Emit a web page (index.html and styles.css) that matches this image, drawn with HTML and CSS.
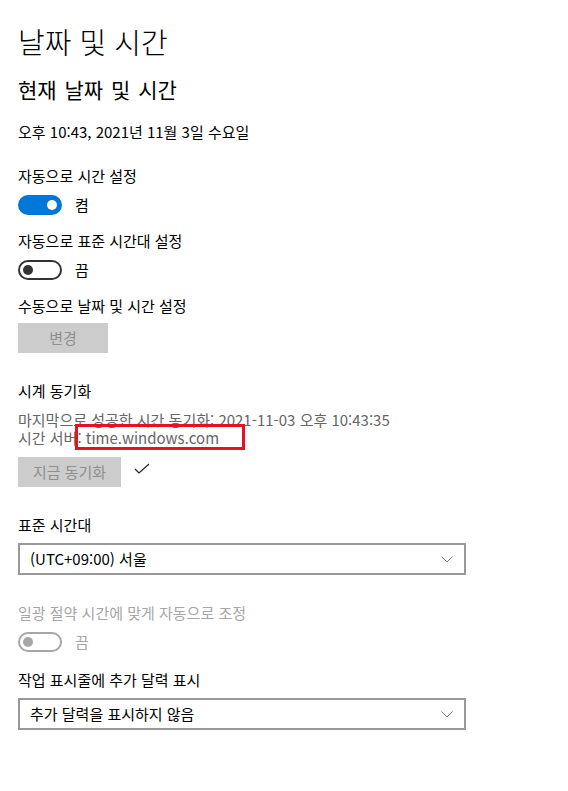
FILE: index.html
```html
<!DOCTYPE html>
<html lang="ko">
<head>
<meta charset="utf-8">
<title>날짜 및 시간</title>
<link rel="stylesheet" href="styles.css">
</head>
<body>
<main class="page">
  <h1 class="title">날짜 및 시간</h1>
  <h2 class="subtitle">현재 날짜 및 시간</h2>
  <p class="text date">오후 10:43, 2021년 11월 3일 수요일</p>

  <p class="text label l1">자동으로 시간 설정</p>
  <div class="toggle-row">
    <span class="toggle on"><span class="knob"></span></span>
    <span class="toggle-text">켬</span>
  </div>

  <p class="text label l2">자동으로 표준 시간대 설정</p>
  <div class="toggle-row">
    <span class="toggle off"><span class="knob"></span></span>
    <span class="toggle-text">끔</span>
  </div>

  <p class="text label l2">수동으로 날짜 및 시간 설정</p>
  <button class="btn btn-change">변경</button>

  <p class="text label section">시계 동기화</p>
  <p class="text info">마지막으로 성공한 시간 동기화: 2021-11-03 오후 10:43:35<br><span class="server">시간 서버: time.windows.com<span class="highlight"></span></span></p>
  <div class="sync-row">
    <button class="btn btn-sync">지금 동기화</button>
    <svg class="check" width="16" height="12" viewBox="0 0 16 12"><polyline points="1,6 5,10 15,1" fill="none" stroke="#222" stroke-width="1.2"/></svg>
  </div>

  <p class="text label section">표준 시간대</p>
  <div class="select">
    <span>(UTC+09:00) 서울</span>
    <svg class="chev" width="12" height="7" viewBox="0 0 12 7"><polyline points="0.5,0.5 6,6 11.5,0.5" fill="none" stroke="#7a7a7a" stroke-width="1"/></svg>
  </div>

  <p class="text label section disabled">일광 절약 시간에 맞게 자동으로 조정</p>
  <div class="toggle-row">
    <span class="toggle dis"><span class="knob"></span></span>
    <span class="toggle-text disabled">끔</span>
  </div>

  <p class="text label l3">작업 표시줄에 추가 달력 표시</p>
  <div class="select">
    <span>추가 달력을 표시하지 않음</span>
    <svg class="chev" width="12" height="7" viewBox="0 0 12 7"><polyline points="0.5,0.5 6,6 11.5,0.5" fill="none" stroke="#7a7a7a" stroke-width="1"/></svg>
  </div>
</main>
</body>
</html>
```
FILE: styles.css
```css
html, body {
  margin: 0;
  padding: 0;
  background: #ffffff;
}
body {
  font-family: "Noto Sans CJK KR", "Noto Sans", sans-serif;
  color: #000;
}
.page {
  padding: 21px 0 0 18px;
  display: flex;
  flex-direction: column;
  align-items: flex-start;
}
.title {
  margin: 0;
  font-size: 29px;
  font-weight: 300;
  line-height: 40px;
}
.subtitle {
  margin: 13px 0 0;
  font-size: 21px;
  font-weight: 400;
  line-height: 30px;
  word-spacing: 2px;
}
.text {
  margin: 0;
  font-size: 15px;
  line-height: 20px;
}
.date { margin-top: 18px; }
.l1 { margin-top: 24px; }
.l2 { margin-top: 16px; }
.l3 { margin-top: 18px; }
.section { margin-top: 28px; }
.disabled { color: #a6a6a6; }

.toggle-row {
  display: flex;
  align-items: center;
  gap: 13px;
  margin-top: 9px;
  height: 20px;
}
.toggle-text { font-size: 15px; line-height: 20px; }
.toggle {
  box-sizing: border-box;
  width: 44px;
  height: 20px;
  border-radius: 10px;
  display: flex;
  align-items: center;
  position: relative;
}
.toggle .knob {
  width: 10px;
  height: 10px;
  border-radius: 50%;
}
.toggle.on {
  background: #0078d7;
  justify-content: flex-end;
  padding-right: 5px;
}
.toggle.on .knob { background: #fff; }
.toggle.off {
  border: 2px solid #333;
  padding-left: 3px;
}
.toggle.off .knob { background: #333; }
.toggle.dis {
  border: 2px solid #a6a6a6;
  padding-left: 3px;
}
.toggle.dis .knob { background: #a6a6a6; }

.btn {
  border: none;
  background: #cccccc;
  color: #8f8f8f;
  font-family: inherit;
  font-size: 15px;
  line-height: 20px;
  padding: 0;
  height: 30px;
}
.btn-change {
  width: 90px;
  margin-top: 7px;
}
.btn-sync { width: 103px; }

.info {
  color: #666;
  line-height: 18px;
  margin-top: 10px;
}
.server { position: relative; }
.highlight {
  position: absolute;
  left: 57px;
  top: -3px;
  width: 170px;
  height: 26px;
  box-sizing: border-box;
  border: 3px solid #e81123;
}
.sync-row {
  display: flex;
  align-items: flex-start;
  gap: 13px;
  margin-top: 10px;
}
.check { margin-top: 6px; }

.select {
  box-sizing: border-box;
  width: 448px;
  height: 32px;
  border: 2px solid #999;
  margin-top: 8px;
  display: flex;
  align-items: center;
  justify-content: space-between;
  padding: 0 10px 0 10px;
  font-size: 15px;
  line-height: 20px;
}
.select .chev { margin-right: 1px; }
```
